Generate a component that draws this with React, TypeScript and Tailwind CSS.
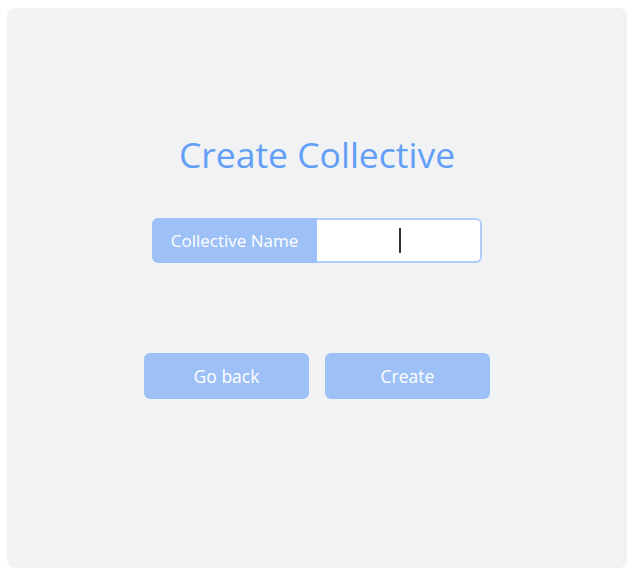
export default function App() {
  return (
    <div className="min-h-[583px] bg-white p-[7px] pt-[8px] pr-[6px] pb-[15px] font-['Open_Sans',sans-serif]">
      <div className="flex h-[560px] flex-col items-center rounded-lg bg-[#f1f2f4]">
        <h1 className="mt-[125px] text-[35.5px] leading-[42px] text-[#62a0f7]">Create Collective</h1>
        <div className="mt-[43px] flex h-[45px] w-[330px] rounded-md">
          <div className="flex w-[165px] items-center justify-center rounded-l-md bg-[#9dc1f7] text-[17px] text-white">
            Collective Name
          </div>
          <div className="flex w-[165px] items-center justify-center rounded-r-md border-2 border-l-0 border-[#b0cef9] bg-white">
            <div className="ml-[2px] h-[25px] w-[2px] bg-[#333]" />
          </div>
        </div>
        <div className="mt-[90px] flex gap-4">
          <button className="h-[46px] w-[165px] rounded-md bg-[#9dc1f7] text-[17.5px] text-white">Go back</button>
          <button className="h-[46px] w-[165px] rounded-md bg-[#9dc1f7] text-[17.5px] text-white">Create</button>
        </div>
      </div>
    </div>
  )
}
